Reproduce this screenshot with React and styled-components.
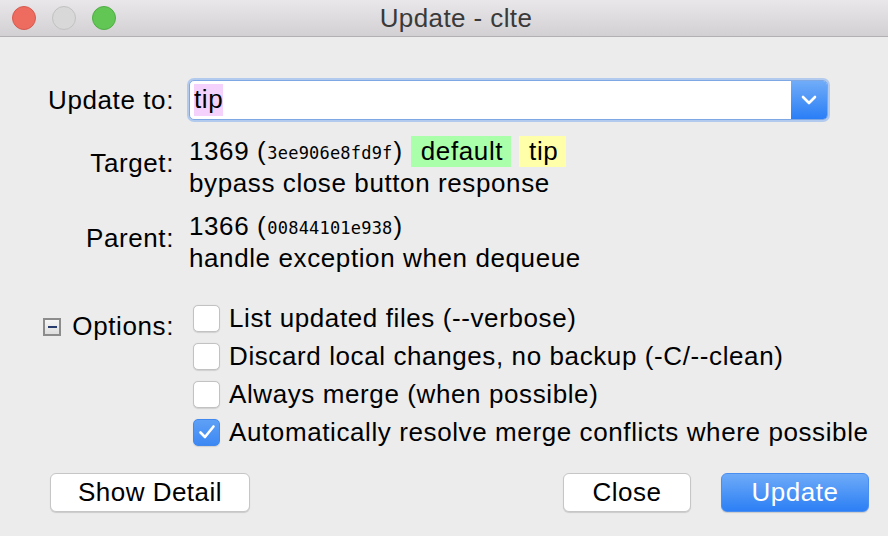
import React from 'react';
import styled, { createGlobalStyle } from 'styled-components';

const GlobalStyle = createGlobalStyle`
  html, body {
    margin: 0;
    padding: 0;
    background: #ececec;
  }
  body {
    font-family: "Liberation Sans", Arial, sans-serif;
    font-size: 26px;
    letter-spacing: 0.6px;
    color: #000;
  }
`;

const options = [
  { label: 'List updated files (--verbose)', checked: false },
  { label: 'Discard local changes, no backup (-C/--clean)', checked: false },
  { label: 'Always merge (when possible)', checked: false },
  { label: 'Automatically resolve merge conflicts where possible', checked: true },
];

function Check({ checked }) {
  return (
    <CheckBox $checked={checked}>
      {checked && (
        <svg width="18" height="16" viewBox="0 0 18 16">
          <path d="M2.5 8.5 L7 13 L15.5 2.5" fill="none" stroke="#fff" strokeWidth="2.6" strokeLinecap="round" strokeLinejoin="round" />
        </svg>
      )}
    </CheckBox>
  );
}

export default function App() {
  return (
    <Window>
      <GlobalStyle />
      <TitleBar>
        <Lights>
          <Light $bg="#ee6b60" $border="#d65a4f" />
          <Light $bg="#d8d8d8" $border="#c2c2c2" />
          <Light $bg="#62c655" $border="#50ad45" />
        </Lights>
        <Title>Update - clte</Title>
        <div />
      </TitleBar>

      <Body>
        <FieldRow>
          <Label>Update to:</Label>
          <Combo>
            <ComboInput>
              <Highlight>tip</Highlight>
            </ComboInput>
            <ComboButton>
              <svg width="16" height="10" viewBox="0 0 16 10">
                <path d="M2 2 L8 8 L14 2" fill="none" stroke="#fff" strokeWidth="2.6" strokeLinecap="round" strokeLinejoin="round" />
              </svg>
            </ComboButton>
          </Combo>
        </FieldRow>

        <FieldRow $mt={15}>
          <Label $lift={8}>Target:</Label>
          <Info>
            <InfoLine>
              1369 (<Hash>3ee906e8fd9f</Hash>)
              <Tag $bg="#aaffaa">default</Tag>
              <Tag $bg="#ffffaa">tip</Tag>
            </InfoLine>
            <InfoLine>bypass close button response</InfoLine>
          </Info>
        </FieldRow>

        <FieldRow $mt={11}>
          <Label $lift={8}>Parent:</Label>
          <Info>
            <InfoLine>
              1366 (<Hash>00844101e938</Hash>)
            </InfoLine>
            <InfoLine>handle exception when dequeue</InfoLine>
          </Info>
        </FieldRow>

        <FieldRow $mt={25} $align="start">
          <OptionsLabel>
            <Collapse>
              <span />
            </Collapse>
            Options:
          </OptionsLabel>
          <OptionList>
            {options.map((o) => (
              <OptionRow key={o.label}>
                <Check checked={o.checked} />
                <OptionText>{o.label}</OptionText>
              </OptionRow>
            ))}
          </OptionList>
        </FieldRow>

        <Footer>
          <Button $width={200}>Show Detail</Button>
          <Spacer />
          <Button $width={128}>Close</Button>
          <Button $width={148} $primary>Update</Button>
        </Footer>
      </Body>
    </Window>
  );
}

const Window = styled.div`
  width: 888px;
  height: 536px;
  display: flex;
  flex-direction: column;
  background: #ececec;
  overflow: hidden;
`;

const TitleBar = styled.div`
  height: 36px;
  flex-shrink: 0;
  display: grid;
  grid-template-columns: 1fr auto 1fr;
  align-items: center;
  background: linear-gradient(#e9e7e9, #d2d0d2);
  border-bottom: 1px solid #b2b0b2;
`;

const Lights = styled.div`
  display: flex;
  gap: 16px;
  padding-left: 12px;
`;

const Light = styled.span`
  width: 22px;
  height: 22px;
  border-radius: 50%;
  background: ${({ $bg }) => $bg};
  border: 1px solid ${({ $border }) => $border};
`;

const Title = styled.div`
  color: #3a3a3a;
  font-size: 26px;
  letter-spacing: 0.4px;
  padding: 1px 0 0 24px;
`;

const Body = styled.div`
  flex: 1;
  padding: 43px 60px 0 0;
  display: flex;
  flex-direction: column;
`;

const FieldRow = styled.div`
  display: grid;
  grid-template-columns: 174px 1fr;
  column-gap: 15px;
  align-items: ${({ $align }) => $align || 'center'};
  margin-top: ${({ $mt }) => $mt || 0}px;
`;

const Label = styled.div`
  text-align: right;
  white-space: nowrap;
  padding-bottom: ${({ $lift }) => $lift || 0}px;
`;

const Combo = styled.div`
  display: flex;
  height: 40px;
  box-sizing: border-box;
  border: 1px solid #7ea8e3;
  border-radius: 5px;
  box-shadow: 0 0 0 2px rgba(140, 180, 238, 0.6);
  background: #fff;
  overflow: hidden;
`;

const ComboInput = styled.div`
  flex: 1;
  display: flex;
  align-items: center;
  padding-left: 4px;
`;

const Highlight = styled.span`
  background: #f4d2fc;
  padding: 1px 0 2px;
  line-height: 29px;
`;

const ComboButton = styled.div`
  width: 36px;
  display: flex;
  align-items: center;
  justify-content: center;
  background: linear-gradient(#70acf8, #2a7ef6);
`;

const Info = styled.div`
  display: flex;
  flex-direction: column;
`;

const InfoLine = styled.div`
  height: 32px;
  display: flex;
  align-items: center;
  white-space: pre;
`;

const Hash = styled.span`
  font-family: "DejaVu Sans Mono", "Liberation Mono", monospace;
  font-size: 17px;
  letter-spacing: 0.2px;
  padding: 3px 1px 0;
`;

const Tag = styled.span`
  background: ${({ $bg }) => $bg};
  height: 31px;
  display: flex;
  align-items: center;
  padding: 0 8px 0 10px;
  margin-left: 8px;
  &:first-of-type {
    margin-left: 14px;
  }
`;

const OptionsLabel = styled.div`
  display: flex;
  align-items: center;
  justify-content: flex-end;
  gap: 11px;
  padding-top: 12px;
`;

const Collapse = styled.div`
  width: 18px;
  height: 18px;
  box-sizing: border-box;
  border: 2px solid #8c8c8c;
  background: linear-gradient(#f6f6f6, #dedede);
  display: flex;
  align-items: center;
  justify-content: center;
  span {
    width: 9px;
    height: 2px;
    background: #283d6e;
  }
`;

const OptionList = styled.div`
  display: flex;
  flex-direction: column;
`;

const OptionRow = styled.div`
  height: 38px;
  display: flex;
  align-items: center;
  gap: 9px;
  padding-left: 4px;
  white-space: nowrap;
`;

const CheckBox = styled.span`
  width: 27px;
  height: 27px;
  box-sizing: border-box;
  border-radius: 5px;
  flex-shrink: 0;
  display: flex;
  align-items: center;
  justify-content: center;
  background: ${({ $checked }) => ($checked ? 'linear-gradient(#5ea0f6, #3c88f3)' : '#fff')};
  border: 1px solid ${({ $checked }) => ($checked ? '#4189ef' : '#c2c2c2')};
  box-shadow: 0 0.5px 1px rgba(0, 0, 0, 0.12);
`;

const OptionText = styled.span``;

const Footer = styled.div`
  display: flex;
  align-items: center;
  gap: 30px;
  margin: 22px -41px 0 50px;
`;

const Spacer = styled.div`
  flex: 1;
`;

const Button = styled.button`
  width: ${({ $width }) => $width}px;
  height: 39px;
  border-radius: 6px;
  font-family: inherit;
  font-size: 26px;
  letter-spacing: 0.5px;
  padding: 0;
  color: ${({ $primary }) => ($primary ? '#fff' : '#000')};
  background: ${({ $primary }) => ($primary ? 'linear-gradient(#6eabf8, #2c7ff5)' : '#fff')};
  border: 1px solid ${({ $primary }) => ($primary ? '#4a8ef0' : '#c6c6c6')};
  box-shadow: 0 1px 1px rgba(0, 0, 0, 0.14);
`;
